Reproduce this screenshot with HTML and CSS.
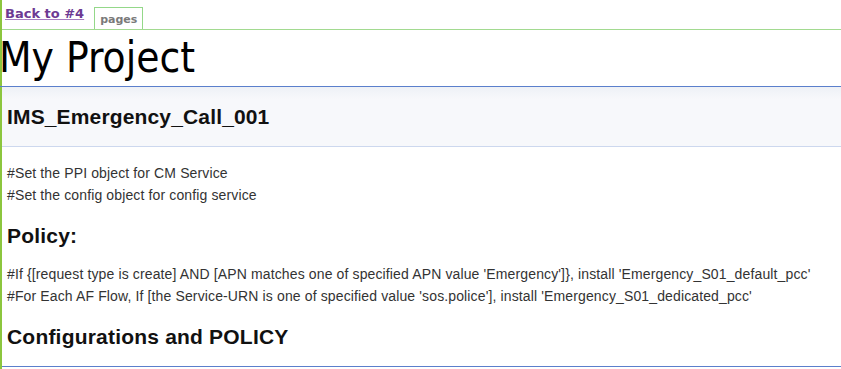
FILE: index.html
```html
<!DOCTYPE html>
<html>
<head>
<meta charset="utf-8">
<link rel="stylesheet" href="styles.css">
</head>
<body>
<div class="page">
  <nav class="topbar">
    <a class="back" href="#">Back to #4</a>
    <span class="tab">pages</span>
  </nav>
  <h1 class="title">My Project</h1>
  <header class="section-head">
    <h2>IMS_Emergency_Call_001</h2>
  </header>
  <div class="content">
    <p>#Set the PPI object for CM Service</p>
    <p>#Set the config object for config service</p>
    <h3>Policy:</h3>
    <p>#If {[request type is create] AND [APN matches one of specified APN value 'Emergency']}, install 'Emergency_S01_default_pcc'</p>
    <p>#For Each AF Flow, If [the Service-URN is one of specified value 'sos.police'], install 'Emergency_S01_dedicated_pcc'</p>
    <h3 class="last">Configurations and POLICY</h3>
  </div>
  <div class="bottom-rule"></div>
</div>
</body>
</html>
```

FILE: styles.css
```css
html, body {
  margin: 0;
  padding: 0;
  background: #ffffff;
}
.page {
  border-left: 2px solid #8cc63e;
  min-height: 369px;
  box-sizing: border-box;
}
.topbar {
  display: flex;
  align-items: flex-end;
  height: 29px;
  border-bottom: 1px solid #a2da90;
  padding-left: 3px;
  box-sizing: content-box;
}
.back {
  font-family: "DejaVu Sans", Verdana, sans-serif;
  font-weight: bold;
  font-size: 13px;
  color: #6d3a93;
  text-decoration: underline;
  text-decoration-color: #a57cc0;
  align-self: flex-start;
  margin-top: 6px;
  line-height: 16px;
}
.tab {
  margin-left: 10px;
  border: 1px solid #94d889;
  border-bottom: none;
  height: 22px;
  box-sizing: border-box;
  padding: 0 5px;
  font-family: "DejaVu Sans", Verdana, sans-serif;
  font-weight: bold;
  font-size: 11px;
  color: #7a7a7a;
  line-height: 24px;
}
.title {
  margin: 0 0 0 -3px;
  font-family: "DejaVu Sans Condensed", "DejaVu Sans", sans-serif;
  font-weight: normal;
  font-size: 42px;
  line-height: 56px;
  color: #000;
  border-bottom: 1px solid #5b7fcc;
  padding-left: 0;
}
.section-head {
  background: linear-gradient(#eef1f6, #f7f8fb 12px, #f7f8fb);
  border-bottom: 1px solid #cdd8ee;
  height: 59px;
  display: flex;
  align-items: center;
  padding-left: 5px;
}
.section-head h2 {
  margin: 0;
  font-family: "Liberation Sans", Arial, sans-serif;
  font-weight: bold;
  font-size: 21px;
  letter-spacing: 0.15px;
  color: #111;
  padding-top: 1px;
}
.content {
  padding: 15px 0 8px 5px;
  font-family: "Liberation Sans", Arial, sans-serif;
  color: #333;
}
.content p {
  margin: 0;
  font-size: 14px;
  letter-spacing: 0.13px;
  line-height: 22px;
}
.content h3 {
  margin: 0;
  font-size: 21px;
  letter-spacing: 0.2px;
  font-weight: bold;
  color: #111;
  line-height: 24px;
  padding: 18px 0 15px;
}
.content h3.last {
  padding-bottom: 9px;
}
.bottom-rule {
  border-bottom: 1px solid #5b7fcc;
}
```
